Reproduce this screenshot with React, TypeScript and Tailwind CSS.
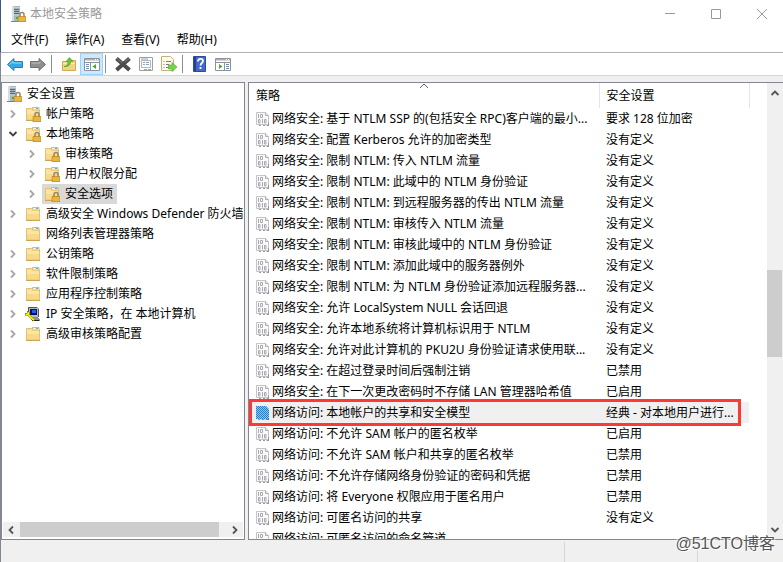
import React from 'react';

type TreeItem = {
  label: string;
  icon: 'server' | 'lock' | 'folder' | 'ip';
  level: number;
  arrow?: 'right' | 'down';
  selected?: boolean;
};

const tree: TreeItem[] = [
  { label: '安全设置', icon: 'server', level: 0 },
  { label: '帐户策略', icon: 'lock', level: 1, arrow: 'right' },
  { label: '本地策略', icon: 'lock', level: 1, arrow: 'down' },
  { label: '审核策略', icon: 'lock', level: 2, arrow: 'right' },
  { label: '用户权限分配', icon: 'lock', level: 2, arrow: 'right' },
  { label: '安全选项', icon: 'lock', level: 2, arrow: 'right', selected: true },
  { label: '高级安全 Windows Defender 防火墙', icon: 'folder', level: 1, arrow: 'right' },
  { label: '网络列表管理器策略', icon: 'folder', level: 1 },
  { label: '公钥策略', icon: 'folder', level: 1, arrow: 'right' },
  { label: '软件限制策略', icon: 'folder', level: 1, arrow: 'right' },
  { label: '应用程序控制策略', icon: 'folder', level: 1, arrow: 'right' },
  { label: 'IP 安全策略，在 本地计算机', icon: 'ip', level: 1, arrow: 'right' },
  { label: '高级审核策略配置', icon: 'folder', level: 1, arrow: 'right' },
];

const policies = [
  ['网络安全: 基于 NTLM SSP 的(包括安全 RPC)客户端的最小...', '要求 128 位加密'],
  ['网络安全: 配置 Kerberos 允许的加密类型', '没有定义'],
  ['网络安全: 限制 NTLM: 传入 NTLM 流量', '没有定义'],
  ['网络安全: 限制 NTLM: 此域中的 NTLM 身份验证', '没有定义'],
  ['网络安全: 限制 NTLM: 到远程服务器的传出 NTLM 流量', '没有定义'],
  ['网络安全: 限制 NTLM: 审核传入 NTLM 流量', '没有定义'],
  ['网络安全: 限制 NTLM: 审核此域中的 NTLM 身份验证', '没有定义'],
  ['网络安全: 限制 NTLM: 添加此域中的服务器例外', '没有定义'],
  ['网络安全: 限制 NTLM: 为 NTLM 身份验证添加远程服务器...', '没有定义'],
  ['网络安全: 允许 LocalSystem NULL 会话回退', '没有定义'],
  ['网络安全: 允许本地系统将计算机标识用于 NTLM', '没有定义'],
  ['网络安全: 允许对此计算机的 PKU2U 身份验证请求使用联...', '没有定义'],
  ['网络安全: 在超过登录时间后强制注销', '已禁用'],
  ['网络安全: 在下一次更改密码时不存储 LAN 管理器哈希值', '已启用'],
  ['网络访问: 本地帐户的共享和安全模型', '经典 - 对本地用户进行...'],
  ['网络访问: 不允许 SAM 帐户的匿名枚举', '已启用'],
  ['网络访问: 不允许 SAM 帐户和共享的匿名枚举', '已禁用'],
  ['网络访问: 不允许存储网络身份验证的密码和凭据', '已禁用'],
  ['网络访问: 将 Everyone 权限应用于匿名用户', '已禁用'],
  ['网络访问: 可匿名访问的共享', '没有定义'],
  ['网络访问: 可匿名访问的命名管道', ''],
];

const SELECTED = 14;

const Lock = () => (
  <g>
    <path d="M10 11V8.500a2 2 0 0 1 4 0V11" fill="none" stroke="#94876a" strokeWidth="1.500" />
    <path d="M8 10.500h8V16H8z" fill="#dfa62a" stroke="#a8760f" strokeWidth=".5" />
    <path d="M8.500 12h7M8.500 14h7" stroke="#f6cf62" strokeWidth=".8" />
  </g>
);

const ServerIcon = () => (
  <svg className="size-4 shrink-0" viewBox="0 0 16 16">
    <path d="M2 0h8v15H2z" fill="#a9b7be" />
    <path d="M2 0h2v15H2z" fill="#d5dfe3" />
    <path d="M4 1.500h6M4 9h6" stroke="#c7d1d6" />
    <path d="M4 3.500h5M4 5.500h5M4 7.500h5" stroke="#566872" />
    <path d="M6 11h2v2H6z" fill="#4da843" />
    <path d="M1 15.500h9" stroke="#74838b" />
    <Lock />
  </svg>
);

const FolderIcon = ({ locked = false }: { locked?: boolean }) => (
  <svg className="size-4 shrink-0" viewBox="0 0 16 16">
    <path d="M7.500 4V1.500h6.500V4" fill="#fdf3cf" stroke="#dcb868" />
    <path d="M11 2.500h2" stroke="#58a9dc" />
    <path d="M1.500 2.500h5l1 1.500H14.500v10h-13z" fill="#f8d98a" stroke="#e3c072" />
    <path d="M2 3.500h4.500l1 1.500H14v3H2z" fill="#fbe5a6" />
    <path d="M1 14.500h14" stroke="#cda555" />
    {locked && <Lock />}
  </svg>
);

const IpIcon = () => (
  <svg className="size-4 shrink-0" viewBox="0 0 16 16" shapeRendering="crispEdges">
    <path d="M4 1h8l2 2v7l-2 1H4z" fill="#b9b9b9" />
    <path d="M3 1h9v1H4v8H3zM13 3h1v8h-1z" fill="#555" />
    <path d="M5 3h7v6H5z" fill="#06105e" />
    <path d="M7 4h4v3H7z" fill="#1e62e8" />
    <path d="M5 11h8l2 3-1 1H7z" fill="#8e8e8e" />
    <path d="M7 14h7v1H7z" fill="#222" />
    <path d="M0 7h2V5l2 1v2l6 6-2 1-5-5-3-1z" fill="#f5ea00" stroke="#6f6a00" strokeWidth=".5" />
  </svg>
);

const PolicyIcon = ({ selected = false }: { selected?: boolean }) => {
  if (selected) {
    return (
      <svg className="size-4 shrink-0" viewBox="0 0 16 16">
        <path d="M1 1h10l3 3v11h-2l-2-1-2 1-2-1-2 1-1-1H1z" fill="#1a84d8" />
        <path
          d="M1 2.500h11M1 4.500h13M1 6.500h13M1 8.500h13M1 10.500h13M1 12.500h13"
          stroke="#8cc4ee"
          strokeDasharray="1 1"
        />
        <path
          d="M2 1.500h9M2 3.500h12M2 5.500h12M2 7.500h12M2 9.500h12M2 11.500h12M2 13.500h12"
          stroke="#8cc4ee"
          strokeDasharray="1 1"
        />
      </svg>
    );
  }
  return (
    <svg className="size-4 shrink-0" viewBox="0 0 16 16">
      <path d="M1.500 1.500H10.500L13.500 4.500V13.500H1.500z" fill="#fafafa" stroke="#c4c4c4" />
      <path d="M10.500 1.500v3h3" fill="#e5e5e5" stroke="#b0b0b0" />
      <path d="M4 14.500h2M8 14.500h2M11.500 14.500h2.500M13.500 11v3" stroke="#999" />
      <g fill="none" stroke="#aaa8b5">
        <path d="M3.500 3v4M5.500 3.500h2v3h-2z" />
        <path d="M3.500 8.500v3.500h1.500V8.500zM7.500 8v4.500M9.500 8.500v3.500h1.500V8.500z" />
      </g>
    </svg>
  );
};

const Chevron = ({ dir, className = 'text-[#555]' }: { dir: 'left' | 'right' | 'up' | 'down'; className?: string }) => {
  const d = {
    left: 'M7 1.500L3.500 5 7 8.500',
    right: 'M3 1.500L6.500 5 3 8.500',
    up: 'M1.500 7L5 3.500 8.500 7',
    down: 'M1.500 3L5 6.500 8.500 3',
  };
  return (
    <svg className={`size-[10px] shrink-0 ${className}`} viewBox="0 0 10 10">
      <path d={d[dir]} fill="none" stroke="currentColor" strokeWidth="1.800" />
    </svg>
  );
};

const TreeIcon = ({ icon }: { icon: TreeItem['icon'] }) => {
  if (icon === 'server') return <ServerIcon />;
  if (icon === 'ip') return <IpIcon />;
  return <FolderIcon locked={icon === 'lock'} />;
};

const TitleBar = () => (
  <header className="-mr-[2px] flex h-7 items-center pl-[9px]">
    <ServerIcon />
    <h1 className="ml-1 flex-1 text-[#999]">本地安全策略</h1>
    <button aria-label="最小化" className="flex h-full w-[46px] items-center justify-center">
      <svg className="size-[10px]" viewBox="0 0 10 10"><path d="M0 4.500h10" stroke="#999" /></svg>
    </button>
    <button aria-label="最大化" className="flex h-full w-[46px] items-center justify-center">
      <svg className="size-[10px]" viewBox="0 0 10 10"><path d="M.5.5h9v9h-9z" fill="none" stroke="#999" /></svg>
    </button>
    <button aria-label="关闭" className="flex h-full w-[46px] items-center justify-center">
      <svg className="size-[10px]" viewBox="0 0 10 10"><path d="M0 0l10 10M10 0L0 10" stroke="#999" /></svg>
    </button>
  </header>
);

const MenuBar = () => (
  <nav className="flex h-6 items-center gap-[17px] pl-[10px]">
    {['文件(F)', '操作(A)', '查看(V)', '帮助(H)'].map((m) => (
      <button key={m}>{m}</button>
    ))}
  </nav>
);

const Separator = () => <div className="mr-[5px] ml-[2px] h-[18px] w-px bg-[#8d8d8d]" />;

const ToolButton = ({ label, active = false, children }: { label: string; active?: boolean; children: React.ReactNode }) => (
  <button
    aria-label={label}
    className={`flex h-[22px] w-[23px] items-center justify-center ${active ? 'border border-[#99d1ff] bg-[#cce8ff]' : ''}`}
  >
    <svg className="size-4 shrink-0" viewBox="0 0 16 16">{children}</svg>
  </button>
);

const ConsoleGlyph = ({ flip = false }: { flip?: boolean }) => (
  <g>
    <path d="M.5 2.500h15v12H.5z" fill="#fff" stroke="#8e939b" />
    <path d="M1 3h14v1.500H1z" fill="#a9aeb6" />
    <path d="M11 3.500h1M13 3.500h1" stroke="#fff" />
    <path d="M1 6.500h14" stroke="#8e939b" />
    <path d={flip ? 'M9.500 7v7' : 'M6.500 7v7'} stroke="#8e939b" />
    <path d={flip ? 'M11 8.500h3M11 10.500h3M11 12.500h3' : 'M2 8.500h3M2 10.500h3M2 12.500h3'} stroke="#6b8fb8" />
    <path d={flip ? 'M4 8l3.500 2.500L4 13z' : 'M12 8l-3.500 2.500L12 13z'} fill="#3fae2a" />
  </g>
);

const Toolbar = () => (
  <div className="flex h-[23px] items-center border-b border-[#d4d4d4] pl-[2px]" role="toolbar">
    <ToolButton label="后退">
      <path d="M.5 8.500L7 2.500v3h8.500v6H7v3z" fill="#35a9e8" stroke="#2a7dbb" />
      <path d="M2.500 8.500l3.500-3v1.500h8.500" fill="none" stroke="#90dcfb" />
    </ToolButton>
    <ToolButton label="前进">
      <path d="M15.500 8.500L9 2.500v3H.5v6H9v3z" fill="#8f8f8f" stroke="#707070" />
      <path d="M1.500 7h8.500V5.500" fill="none" stroke="#bdbdbd" />
    </ToolButton>
    <Separator />
    <ToolButton label="上移">
      <path d="M1.500 5.500h6l1-1h6v10h-13z" fill="#f3d485" stroke="#cfa958" />
      <path d="M2 7h12v1H2z" fill="#fbe9b4" />
      <path d="M3 10.500C6.500 10 7 8 7 5.500H5L8.500 1.500l3.500 4H9.500c0 3-1.500 5.500-6.500 5z" fill="#62c83a" stroke="#4a9c2c" strokeWidth=".6" />
    </ToolButton>
    <ToolButton label="显示/隐藏控制台树" active>
      <ConsoleGlyph />
    </ToolButton>
    <Separator />
    <ToolButton label="删除">
      <path d="M1.500 2.500l13 11.500M14.500 2.500L1.500 14" stroke="#4c4c4c" strokeWidth="4" />
      <path d="M2 2.500l5 4.500M14 2.500l-4 3.500" stroke="#808080" />
    </ToolButton>
    <ToolButton label="属性">
      <path d="M1.500 1.500h13v13h-13z" fill="#fff" stroke="#a0a0a0" />
      <path d="M3.500 4.500h9v7h-9z" fill="none" stroke="#b5b5b5" />
      <path d="M3 3h7M5 6.500h2M8 6.500h3M5 8.500h2M8 8.500h3" stroke="#8aa2b8" />
      <path d="M6 13.500h3M10 13.500h3" stroke="#4fc3ea" />
    </ToolButton>
    <ToolButton label="导出列表">
      <path d="M.5.5h9L12.500 3.500v11H.5z" fill="#fffbea" stroke="#c2b47f" />
      <path d="M2.500 5.500h1M5 5.500h5M2.500 8.500h1M5 8.500h3M2.500 11.500h1M5 11.500h3" stroke="#7a7a86" />
      <path d="M7.500 9h3.500V6.500l5 4.500-5 4.500V13H7.500z" fill="#74d548" stroke="#4cab29" strokeWidth=".6" />
    </ToolButton>
    <Separator />
    <ToolButton label="帮助">
      <path d="M1.500.5h12v15h-12z" fill="#4369cf" stroke="#2c4a9f" />
      <path d="M2 1h2v14H2z" fill="#27418f" />
      <path d="M6 5.500c0-3.500 5-3.500 5-.5 0 2-2.500 2-2.500 4.500M8.500 11v2" fill="none" stroke="#fff" strokeWidth="1.800" />
    </ToolButton>
    <ToolButton label="显示/隐藏操作窗格">
      <ConsoleGlyph flip />
    </ToolButton>
  </div>
);

const TreePanel = () => (
  <aside className="flex w-[244px] shrink-0 flex-col border border-[#828790] bg-white px-px pt-px pb-[2px]">
    <ul className="min-h-0 flex-1 overflow-hidden">
      {tree.map((item) => (
        <li
          key={item.label}
          className={`flex h-5 items-center whitespace-nowrap ${item.level === 0 ? 'pl-px' : item.level === 1 ? 'pl-[5px]' : 'pl-6'}`}
        >
          {item.level > 0 && (
            <span className="mr-[5px] flex w-[10px] shrink-0">
              {item.arrow && <Chevron dir={item.arrow} className={item.arrow === 'down' ? 'text-[#404040]' : 'text-[#a6a6a6]'} />}
            </span>
          )}
          <span className={`flex h-5 items-center gap-[5px] pr-1 pl-[2px] ${item.selected ? 'bg-[#d9d9d9]' : ''}`}>
            <TreeIcon icon={item.icon} />
            {item.label}
          </span>
        </li>
      ))}
    </ul>
    <div className="flex h-[15px] items-center justify-between bg-[#f0f0f0] px-[3px]">
      <Chevron dir="left" />
      <div className="mr-[11px] ml-1 h-full flex-1 bg-[#cdcdcd]" />
      <Chevron dir="right" />
    </div>
  </aside>
);

const PolicyTable = () => (
  <div className="min-w-0 flex-1 overflow-hidden">
    <table className="w-full table-fixed text-left">
      <thead>
        <tr className="h-[25px]">
          <th className="relative border-r border-[#e5e5e5] pl-[7px] font-normal">
            策略
            <svg className="absolute top-0 left-1/2 h-[6px] w-[9px] -translate-x-1/2" viewBox="0 0 9 6">
              <path d="M.5 5l4-4 4 4" fill="none" stroke="#666" />
            </svg>
          </th>
          <th className="w-[150px] border-r border-[#e5e5e5] pl-[7px] font-normal">安全设置</th>
          <th className="w-[18px]" />
        </tr>
      </thead>
      <tbody>
        {policies.map(([name, value], i) => (
          <tr key={name} className="h-[21px]">
            <td className={`whitespace-nowrap pl-[6px] ${i === SELECTED ? 'bg-[#f0f0f0]' : ''}`}>
              <span className="flex items-center gap-px">
                <PolicyIcon selected={i === SELECTED} />
                {name}
              </span>
            </td>
            <td className={`whitespace-nowrap pl-[7px] ${i === SELECTED ? 'bg-[#f0f0f0]' : ''}`}>{value}</td>
            <td />
          </tr>
        ))}
      </tbody>
    </table>
  </div>
);

const App: React.FC = () => {
  return (
    <div className="flex h-screen flex-col overflow-hidden bg-white font-['Noto_Sans','Noto_Sans_CJK_SC',sans-serif] text-[12px] leading-4 text-black">
      <div className="border-l border-[#3b5685]">
        <TitleBar />
        <MenuBar />
      </div>
      <div className="flex min-h-0 flex-1 flex-col border-l border-[#828790]">
        <div className="h-px bg-[#b0b0b0]" />
        <Toolbar />
        <main className="flex min-h-0 flex-1 gap-[3px] bg-[#f0f0f0] pt-[6px]">
          <TreePanel />
          <section className="relative flex min-w-0 flex-1 border border-r-0 border-[#828790] bg-white">
            <PolicyTable />
            <div className="flex w-4 shrink-0 flex-col items-center bg-[#f0f0f0] pt-[5px] pb-1">
              <Chevron dir="up" />
              <div className="flex w-full flex-1 flex-col pt-[172px] pr-px">
                <div className="h-[87px] bg-[#cdcdcd]" />
              </div>
              <Chevron dir="down" />
            </div>
            <div className="pointer-events-none absolute top-[316px] right-[42px] left-0 h-[27px] border-3 border-[#fb3a36]" />
          </section>
        </main>
        <footer className="flex h-[22px] shrink-0 bg-[#f0f0f0] pt-[2px]">
          <div className="flex-1" />
          <div className="w-[133px] border-l border-[#d7d7d7]" />
          <div className="relative w-[86px] border-l border-[#d7d7d7]">
            <span className="absolute right-2 bottom-2 font-['Liberation_Sans','Noto_Sans_CJK_SC',sans-serif] text-[16px] leading-5 whitespace-nowrap text-[#555] [text-shadow:1px_1px_1px_white,-1px_-1px_1px_white]">
              @51CTO博客
            </span>
          </div>
        </footer>
      </div>
    </div>
  );
};

export default App;
